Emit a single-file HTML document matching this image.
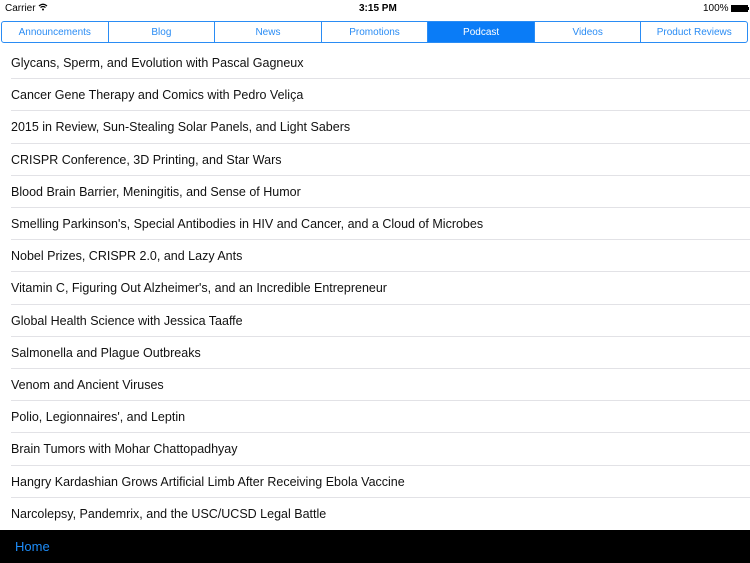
<html><head><style>
body{margin:0;width:750px;height:563px;overflow:hidden;background:#fff;font-family:"Liberation Sans",sans-serif;position:relative}
.sb{position:absolute;top:0;left:0;width:750px;height:16px;font-size:10px}
.seg{position:absolute;left:1px;top:21px;width:745px;height:20px;border:1px solid #2a8cf4;border-radius:3px;display:flex;overflow:hidden}
.seg div{flex:1;text-align:center;font-size:10px;line-height:21px;color:#2a8cf4;border-left:1px solid #2a8cf4}
.seg div:first-child{border-left:none}
.seg .on{background:#0a7cf7;color:#fff}
.row{position:absolute;left:11px;right:0;height:32.2px;line-height:33px;font-size:12.5px;color:#111;border-bottom:1px solid #e2e2e6;box-sizing:border-box}
.bar{position:absolute;left:0;top:530px;width:750px;height:33px;background:#000}
.bar span{position:absolute;left:15px;top:9px;color:#1d8cf8;font-size:13px}
</style></head><body>
<div class="sb"><span style="position:absolute;left:5px;top:3px">Carrier <svg width="10" height="8" viewBox="0 0 10 8"><path d="M1 3Q5 -0.5 9 3M2.5 4.5Q5 2.5 7.5 4.5" stroke="#000" fill="none" stroke-width="1.2"/><circle cx="5" cy="6.5" r="1"/></svg></span>
<span style="position:absolute;left:359px;top:3px;font-weight:bold">3:15 PM</span>
<span style="position:absolute;left:703px;top:3px">100% <span style="display:inline-block;width:17px;height:7px;background:#000;vertical-align:-1px"></span><span style="display:inline-block;width:1px;height:3px;background:#000;vertical-align:1px"></span></span></div>
<div class="seg"><div>Announcements</div><div>Blog</div><div>News</div><div>Promotions</div><div class="on">Podcast</div><div>Videos</div><div>Product Reviews</div></div>
<div class="row" style="top:47px">Glycans, Sperm, and Evolution with Pascal Gagneux</div>
<div class="row" style="top:79.2px">Cancer Gene Therapy and Comics with Pedro Veliça</div>
<div class="row" style="top:111.4px">2015 in Review, Sun-Stealing Solar Panels, and Light Sabers</div>
<div class="row" style="top:143.6px">CRISPR Conference, 3D Printing, and Star Wars</div>
<div class="row" style="top:175.8px">Blood Brain Barrier, Meningitis, and Sense of Humor</div>
<div class="row" style="top:208px">Smelling Parkinson's, Special Antibodies in HIV and Cancer, and a Cloud of Microbes</div>
<div class="row" style="top:240.2px">Nobel Prizes, CRISPR 2.0, and Lazy Ants</div>
<div class="row" style="top:272.4px">Vitamin C, Figuring Out Alzheimer's, and an Incredible Entrepreneur</div>
<div class="row" style="top:304.6px">Global Health Science with Jessica Taaffe</div>
<div class="row" style="top:336.8px">Salmonella and Plague Outbreaks</div>
<div class="row" style="top:369px">Venom and Ancient Viruses</div>
<div class="row" style="top:401.2px">Polio, Legionnaires', and Leptin</div>
<div class="row" style="top:433.4px">Brain Tumors with Mohar Chattopadhyay</div>
<div class="row" style="top:465.6px">Hangry Kardashian Grows Artificial Limb After Receiving Ebola Vaccine</div>
<div class="row" style="top:497.8px;border:none">Narcolepsy, Pandemrix, and the USC/UCSD Legal Battle</div>
<div class="bar"><span>Home</span></div>
</body></html>
